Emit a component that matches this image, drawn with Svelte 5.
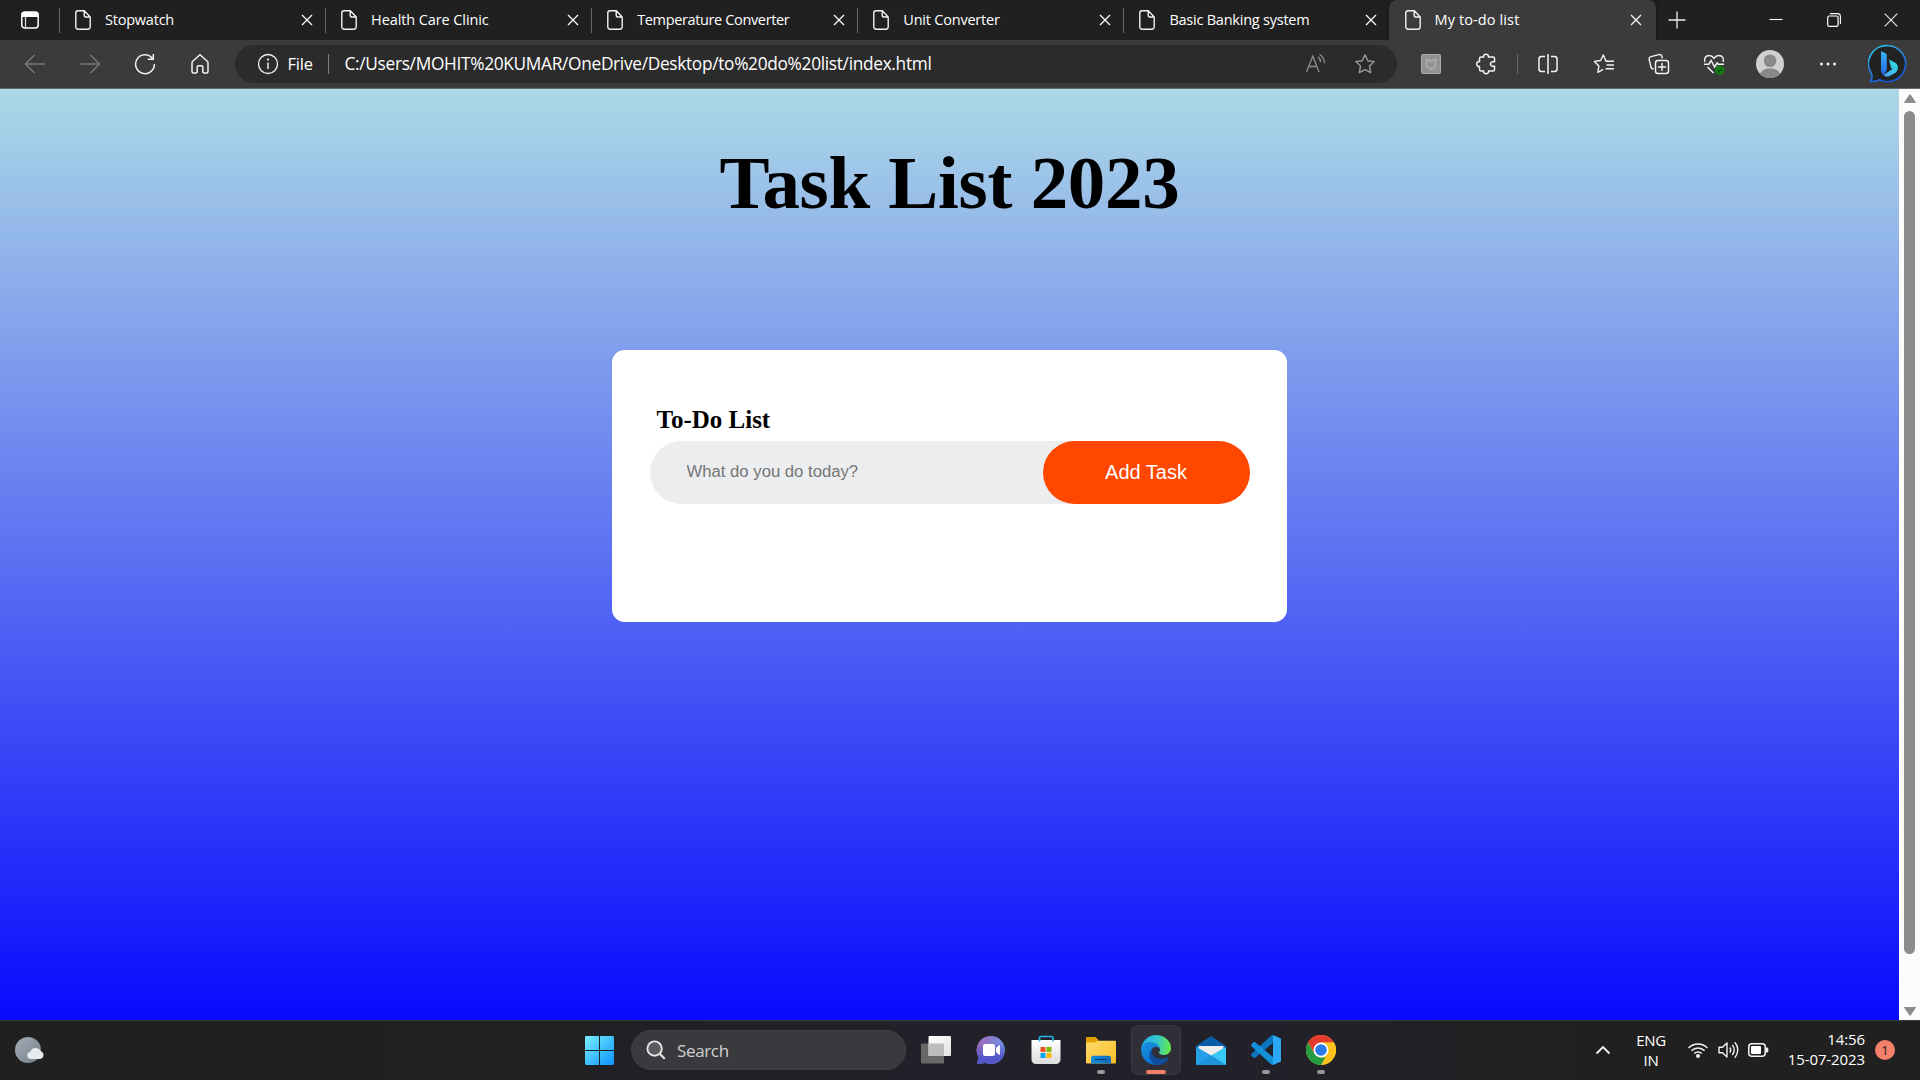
<script>
  const tabs = [
    { title: 'Stopwatch', fit: 'a' },
    { title: 'Health Care Clinic', fit: 'b' },
    { title: 'Temperature Converter', fit: 'c' },
    { title: 'Unit Converter', fit: 'd' },
    { title: 'Basic Banking system', fit: 'e' },
    { title: 'My to-do list', fit: 'f', active: true },
  ];
</script>

<div class="screen">
  <header class="tabbar">
    <div class="workspace">
      <svg width="20" height="20" viewBox="0 0 20 20"><rect x="1.8" y="2" width="16.4" height="16" rx="3" fill="none" stroke="#fff" stroke-width="1.5" /><path d="M1.5 7V5a3 3 0 0 1 3-3h11a3 3 0 0 1 3 3v2z" fill="#fff" /><path d="M5.500 7v11" stroke="#ddd" stroke-width="1.200" /></svg>
    </div>
    {#each tabs as tab}
      <div class="tab" class:active={tab.active}>
        <svg class="doc" width="16" height="20" viewBox="0 0 16 20"><path d="M3 .8h6.3L15.2 7v10a2.2 2.2 0 0 1-2.2 2.2H3A2.2 2.2 0 0 1 .8 17V3A2.2 2.2 0 0 1 3 .8zM9.2 1v4.2A1.8 1.8 0 0 0 11 7h4" fill="none" stroke="#f2f2f2" stroke-width="1.4" /></svg>
        <span class="title {tab.fit}">{tab.title}</span>
        <svg class="x" width="12" height="12" viewBox="0 0 12 12"><path d="M1 1l10 10M11 1L1 11" stroke="#f4f4f4" stroke-width="1.4" /></svg>
      </div>
    {/each}
    <svg class="plus" width="18" height="18" viewBox="0 0 18 18"><path d="M9 .5v17M.5 9h17" stroke="#eee" stroke-width="1.3" /></svg>
    <div class="caption">
      <svg width="14" height="14" viewBox="0 0 14 14"><path d="M.5 6.500h13" stroke="#fff" stroke-width="1.1" /></svg>
      <svg width="14" height="14" viewBox="0 0 14 14"><path d="M3 .6h7.6A2.8 2.8 0 0 1 13.4 3.4V11" fill="none" stroke="#fff" stroke-width="1.1" /><rect x=".7" y="3" width="10.4" height="10.4" rx="1.6" fill="none" stroke="#fff" stroke-width="1.2" /></svg>
      <svg width="14" height="14" viewBox="0 0 14 14"><path d="M.7 .7l12.6 12.6M13.3 .7L.7 13.3" stroke="#eee" stroke-width="1.1" /></svg>
    </div>
  </header>

  <nav class="toolbar">
    <div class="navs">
      <svg width="22" height="22" viewBox="0 0 22 22"><path d="M21 11H2M10.5 2L1.5 11l9 9" fill="none" stroke="#777" stroke-width="1.5" /></svg>
      <svg width="22" height="22" viewBox="0 0 22 22"><path d="M1 11h19M11.5 2l9 9-9 9" fill="none" stroke="#777" stroke-width="1.5" /></svg>
      <svg width="22" height="22" viewBox="0 0 22 22"><path d="M18.2 5.2A9.4 9.4 0 1 0 20.4 11M19.3 1v5.3h-5.5" fill="none" stroke="#f2f2f2" stroke-width="1.5" /></svg>
      <svg width="22" height="22" viewBox="0 0 22 22"><path d="M11 1.8l7.3 6.4a2 2 0 0 1 .7 1.5v8.8a1.5 1.5 0 0 1-1.5 1.5h-2.2a1.5 1.5 0 0 1-1.5-1.5V14a1.3 1.3 0 0 0-1.3-1.3h-3A1.3 1.3 0 0 0 8.2 14v4.5A1.5 1.5 0 0 1 6.700 20H4.500A1.500 1.500 0 0 1 3 18.500V9.700a2 2 0 0 1 .7-1.500z" fill="none" stroke="#f2f2f2" stroke-width="1.500" /></svg>
    </div>
    <div class="address">
      <svg width="22" height="22" viewBox="0 0 22 22"><circle cx="11" cy="11" r="9.500" fill="none" stroke="#eee" stroke-width="1.300" /><path d="M11 9.500V16" stroke="#eee" stroke-width="1.500" /><circle cx="11" cy="6.600" r="1.100" fill="#eee" /></svg>
      <span class="scheme">File</span>
      <i class="bar"></i>
      <span class="url">C:/Users/MOHIT%20KUMAR/OneDrive/Desktop/to%20do%20list/index.html</span>
      <svg class="read" width="22" height="22" viewBox="0 0 22 22"><path d="M1.500 19L7.800 3l6.200 16M3.800 13.500h8M13 3.800c1.700 1.300 2.500 3 2.600 5.200M14.500 1.300c3.200 2.200 4.900 5.400 5 9" fill="none" stroke="#8e8e8e" stroke-width="1.300" /></svg>
      <svg class="fav" width="22" height="22" viewBox="0 0 22 22"><path d="M11 1.800l2.800 5.900 6.400.9-4.700 4.500 1.200 6.600L11 16.600l-5.700 3.100 1.200-6.600L1.800 8.600l6.400-.9z" fill="none" stroke="#999" stroke-width="1.400" stroke-linejoin="round" /></svg>
    </div>
    <div class="actions">
      <svg width="22" height="22" viewBox="0 0 22 22"><rect x="1.500" y="1.500" width="19" height="19" rx="1" fill="#929292" stroke="#a5abb0" /><path d="M6.500 6.200l4.500 2 4.500-2v7.600L11 16.200l-4.500-2.400z" fill="none" stroke="#a9adb0" stroke-width="1.700" /></svg>
      <svg width="22" height="22" viewBox="0 0 22 22"><path d="M6 4h2.600C8.300 2 9.500 1.300 11 1.300S13.700 2 13.400 4H18a1.500 1.500 0 0 1 1.500 1.500v3.300c-2.600-.5-4 .6-4 2.200s1.400 2.700 4 2.200v3.300A1.500 1.500 0 0 1 18 18h-4.400c.2 1.800-.9 2.700-2.500 2.700s-2.800-.9-2.500-2.700H6a1.500 1.500 0 0 1-1.500-1.500v-3C2.500 13.700 1.700 12.500 1.700 11s.9-2.600 2.800-2.400V5.500A1.500 1.500 0 0 1 6 4z" fill="none" stroke="#f2f2f2" stroke-width="1.500" /></svg>
      <i class="bar dim"></i>
      <svg width="22" height="22" viewBox="0 0 22 22"><path d="M8 3.500H4.500a2.500 2.500 0 0 0-2.500 2.500v10a2.500 2.500 0 0 0 2.500 2.500H8M14 3.500h3.500a2.500 2.500 0 0 1 2.500 2.500v10a2.500 2.500 0 0 1-2.500 2.500H14M11 1v20" fill="none" stroke="#f5f5f5" stroke-width="1.500" /></svg>
      <svg width="22" height="22" viewBox="0 0 22 22"><path d="M15 8.200l-2.200-.4L10.300 2 7.600 7.500l-6.200.9 4.500 4.500-1.100 6.400 5.400-3M12.500 8.200H21M13.500 12H21M12.500 15.800H21" fill="none" stroke="#f2f2f2" stroke-width="1.400" stroke-linejoin="round" /></svg>
      <svg width="22" height="22" viewBox="0 0 22 22"><rect x="7.500" y="7.500" width="13" height="13" rx="2.500" fill="none" stroke="#f2f2f2" stroke-width="1.500" /><path d="M14 10v8M10 14h8M5.500 16c-1.500 0-2.300-.8-2.700-2.500L1.200 6.500C.9 5 1.500 4 3 3.600l8-2c1.500-.3 2.600.3 2.900 1.800l.4 2" fill="none" stroke="#f2f2f2" stroke-width="1.400" /></svg>
      <svg width="22" height="22" viewBox="0 0 22 22"><path d="M1.900 9C.5 5.500 3 2.500 6 2.500c2.200 0 3.700 1 5 2.700 1.300-1.700 2.800-2.700 5-2.700 3 0 5.500 3 4.100 6.500M1 11.200h4.800l2.300-3.700 3.500 6.500 2.600-4.200 1 1.400H21M4.500 14l6 6" fill="none" stroke="#f2f2f2" stroke-width="1.500" /><circle cx="16.700" cy="17.200" r="4.700" fill="#107c10" /><path d="M14.700 17.200l1.500 1.500 2.700-2.900" fill="none" stroke="#07450a" stroke-width="1.200" /></svg>
      <svg class="avatar" width="28" height="28" viewBox="0 0 28 28"><clipPath id="face"><circle cx="14" cy="14" r="14" /></clipPath><g clip-path="url(#face)"><path d="M0 0h28v28H0z" fill="#d2d0ce" /><circle cx="14" cy="10.700" r="6.300" fill="#8a8886" /><ellipse cx="14" cy="26" rx="10.500" ry="7.800" fill="#8a8886" /></g></svg>
      <svg class="dots" width="18" height="6" viewBox="0 0 18 6"><g fill="#f2f2f2"><circle cx="2.500" cy="3" r="1.500" /><circle cx="9" cy="3" r="1.500" /><circle cx="15.500" cy="3" r="1.500" /></g></svg>
      <svg class="bing" width="40" height="40" viewBox="0 0 40 40">
        <defs><linearGradient id="bo" x1="0" y1="0" x2=".5" y2="1"><stop stop-color="#25d0ef" /><stop offset=".5" stop-color="#278ce8" /><stop offset="1" stop-color="#1757d8" /></linearGradient><linearGradient id="bb" x1="0" y1="0" x2="0" y2="1"><stop stop-color="#39b5f5" /><stop offset="1" stop-color="#2367e7" /></linearGradient><linearGradient id="bc" x1="1" y1="0" x2="0" y2="1"><stop stop-color="#29dfd6" /><stop offset="1" stop-color="#4ba3ff" /></linearGradient></defs>
        <path d="M20 1.700a18 18 0 1 1-8.500 34.100c-2.400 1.500-5.500 2-8.800 1.800 1.500-2.500 1.500-5.300.8-8A18 18 0 0 1 20 1.700z" fill="#222" stroke="url(#bo)" stroke-width="1.600" />
        <path d="M13 7l5 2.500c.6.300.8.800.8 1.500v15l-3 5c-1.800-1-2.800-2.600-2.800-5z" fill="url(#bb)" /><path d="M21 15.500l5.500 2.700c2.800 1.500 4 4.100 3.200 7-.5 1.800-1.500 3-3 4l-5.200 2.900c-2 1.200-4.400.7-5.800-1l3.100-2.300 5.700-3.800-1.500-1.200z" fill="url(#bc)" />
      </svg>
    </div>
  </nav>

  <div class="viewport">
    <main>
      <h1>Task List 2023</h1>
      <section class="card">
        <h2>To-Do List</h2>
        <div class="row">
          <input type="text" placeholder="What do you do today?" />
          <button>Add Task</button>
        </div>
      </section>
    </main>
    <aside class="scrollbar">
      <svg width="12" height="9" viewBox="0 0 12 9"><path d="M6 .5L11.500 8.500H.5z" fill="#8b8b8b" stroke="#8b8b8b" stroke-linejoin="round" /></svg>
      <div class="thumb"></div>
      <svg class="down" width="12" height="9" viewBox="0 0 12 9"><path d="M6 8.500L11.500 .5H.5z" fill="#8b8b8b" stroke="#8b8b8b" stroke-linejoin="round" /></svg>
    </aside>
  </div>

  <footer class="taskbar">
    <div class="weather">
      <svg width="30" height="28" viewBox="0 0 30 28"><defs><linearGradient id="moon" x1="0" y1="0" x2="1" y2="1"><stop stop-color="#a4afba" /><stop offset="1" stop-color="#747d86" /></linearGradient></defs><circle cx="13" cy="14" r="13" fill="url(#moon)" /><path d="M15.500 23a3.700 3.700 0 0 1-.2-7.300 5.600 5.600 0 0 1 10.300-.5 4 4 0 0 1-.6 7.800z" fill="#e6ebf0" /></svg>
    </div>
    <div class="dock">
      <svg class="start" width="29" height="29" viewBox="0 0 29 29"><defs><linearGradient id="win" gradientUnits="userSpaceOnUse" x1="0" y1="0" x2="29" y2="29"><stop stop-color="#78f0ff" /><stop offset="1" stop-color="#0b93fb" /></linearGradient></defs><path d="M1 0h13v14H0V1zM15 0h13l1 1v13H15zM0 15h14v14H1l-1-1zM15 15h14v13l-1 1H15z" fill="url(#win)" /></svg>
      <div class="search">
        <svg width="20" height="20" viewBox="0 0 20 20"><circle cx="8.600" cy="8.600" r="7.200" fill="#5a595e" stroke="#e4e4e4" stroke-width="1.900" /><path d="M13.700 13.700l4.500 4.500" stroke="#e4e4e4" stroke-width="2.200" stroke-linecap="round" /></svg>
        <span>Search</span>
      </div>
      <div class="app">
        <svg width="32" height="30" viewBox="0 0 32 30"><defs><linearGradient id="tv" x1="0" y1="0" x2="1" y2="1"><stop stop-color="#fff" /><stop offset="1" stop-color="#e2e2e2" /></linearGradient></defs><rect x="1" y="8.500" width="23" height="20" rx="1" fill="#686868" /><rect x="8.500" y="1" width="22.500" height="20" rx="1" fill="url(#tv)" /><path d="M8.500 8.500H24V21H8.500z" fill="#bcbcbc" /></svg>
      </div>
      <div class="app">
        <svg width="30" height="30" viewBox="0 0 30 30"><defs><linearGradient id="chat" x1="0" y1="0" x2="1" y2="0"><stop stop-color="#a268b4" /><stop offset="1" stop-color="#6f91e8" /></linearGradient><linearGradient id="chat2" x1="0" y1="0" x2="0" y2="1"><stop offset=".25" stop-color="#5558c8" stop-opacity="0" /><stop offset=".75" stop-color="#5558c8" /></linearGradient></defs><path d="M15 1a14 14 0 1 1-5.500 26.900L1 29l1.500-7A14 14 0 0 1 15 1z" fill="url(#chat)" /><path d="M15 1a14 14 0 1 1-5.500 26.900L1 29l1.500-7A14 14 0 0 1 15 1z" fill="url(#chat2)" /><rect x="7" y="9" width="12" height="12" rx="2.200" fill="#fff" /><path d="M20 13l2.700-2.500c.6-.5 1.300-.2 1.300.6v7.800c0 .8-.7 1.100-1.300.6L20 17z" fill="#fff" /></svg>
      </div>
      <div class="app">
        <svg width="30" height="30" viewBox="0 0 30 30"><defs><linearGradient id="bag" x1="0" y1="0" x2="0" y2="1"><stop stop-color="#fff" /><stop offset="1" stop-color="#dcdcdc" /></linearGradient></defs><path d="M.5 5h29v19.500a4.500 4.500 0 0 1-4.500 4.500H5a4.500 4.500 0 0 1-4.500-4.500z" fill="url(#bag)" /><path d="M8.500 6.500V3A1.500 1.500 0 0 1 10 1.500h10.500A1.500 1.500 0 0 1 22 3v3.500" fill="none" stroke="#24b4ea" stroke-width="1.700" /><path d="M9.500 12h5v5h-5z" fill="#f25022" /><path d="M15.500 12h5v5h-5z" fill="#7fba00" /><path d="M9.500 18h5v5h-5z" fill="#00a4ef" /><path d="M15.500 18h5v5h-5z" fill="#ffb900" /></svg>
      </div>
      <div class="app running">
        <svg width="30" height="28" viewBox="0 0 30 28"><defs><linearGradient id="fold" x1="0" y1="0" x2="1" y2="1"><stop stop-color="#ffdc6c" /><stop offset="1" stop-color="#f8bd25" /></linearGradient><linearGradient id="pkt" x1="0" y1="0" x2="1" y2="0"><stop stop-color="#1490df" /><stop offset="1" stop-color="#0f69bc" /></linearGradient></defs><path d="M0 2A1 1 0 0 1 1 1h8.500l3 3v4H0z" fill="#e0a203" /><path d="M0 6.500h9l3-1.700h17a1 1 0 0 1 1 1V26.500a1 1 0 0 1-1 1H1a1 1 0 0 1-1-1z" fill="url(#fold)" /><path d="M5 27.500V22a2.300 2.300 0 0 1 2.300-2.300h15.400A2.300 2.300 0 0 1 25 22v5.500z" fill="url(#pkt)" /><path d="M8.500 23.500h13" stroke="#093f7c" stroke-width="1.200" /></svg>
      </div>
      <div class="app focused">
        <svg width="30" height="30" viewBox="0 0 30 30">
          <defs><linearGradient id="e1" x1="0" y1=".4" x2="1" y2=".5"><stop stop-color="#2aaeea" /><stop offset=".5" stop-color="#30c5cb" /><stop offset="1" stop-color="#6bea47" /></linearGradient><linearGradient id="e2" x1="0" y1="0" x2=".5" y2="1"><stop stop-color="#1c91dd" /><stop offset="1" stop-color="#0874d6" /></linearGradient></defs>
          <path d="M.2 13.500C1 6 7.300 0 15 0c8.500 0 15 6 15 13 0 4.300-3.300 7-7.200 7-3 0-4.800-1-4.800-2.200 0-.8 1-1.300 1-3.200 0-2-2-4.500-6-4.500z" fill="url(#e1)" />
          <path d="M.1 14.500C.5 9.500 4.500 7 9 7c5.500 0 10 3.500 10 7.500-1-2-2.700-2.800-4.200-2.800-2.800 0-4.800 3-4.800 6.300 0 6 4.500 10.500 9.800 11C10 32 0 25.300.1 14.500z" fill="url(#e2)" />
          <path d="M12.600 12.300c-1.800 1.200-2.100 3.400-1.800 5 .8 4.300 5 6.700 9.700 6.700 2.500 0 4.600-.8 6.300-1.900.8-.5 1.500.1 1 .9C25 28 20 30.500 16 30 10 28.500 8 23 8.500 19c.3-3 1.800-5.500 4.100-6.700z" fill="#104d9a" />
        </svg>
      </div>
      <div class="app">
        <svg width="30" height="29" viewBox="0 0 30 29"><path d="M0 10L15 0l15 10v5H0z" fill="#0a5da8" /><path d="M2.500 10h25v9l-12.500 4L2.500 17z" fill="#eee" /><path d="M0 11l15 9 15-9v18H0z" fill="#26a9ea" /><path d="M30 11v18L15 19.500z" fill="#38c8f4" /><path d="M0 11l15 8.500L30 29H0z" fill="#1f93de" /><path d="M0 11l15 8.500L0 29z" fill="#25a0e6" /></svg>
      </div>
      <div class="app running">
        <svg width="30" height="30" viewBox="0 0 30 30"><path d="M22 0v8L4.500 22.500c-.7.600-1.500.6-2.200 0L.7 21c-.8-.8-.8-1.800 0-2.600L20 .7z" fill="#0b75bd" /><path d="M22 30v-8L4.500 7.500c-.7-.6-1.500-.6-2.200 0L.7 9c-.8.800-.8 1.800 0 2.600L20 29.300z" fill="#1390d8" /><path d="M22 0l8 3.500v23L22 30z" fill="#2aa8f3" /></svg>
      </div>
      <div class="app running">
        <svg width="30" height="30" viewBox="0 0 30 30"><circle cx="15" cy="15" r="15" fill="#fcc21b" /><path d="M15 7.500h13a15 15 0 0 0-26 0l6.500 11.300z" fill="#e33b2e" /><path d="M2 7.500l6.500 11.300L15 22.500h6.500L15 30A15 15 0 0 1 2 7.500z" fill="#269a43" /><path d="M21.500 18.700L15 30a15 15 0 0 0 13-22.500H15z" fill="#fcc21b" /><circle cx="15" cy="15" r="7.500" fill="#fff" /><circle cx="15" cy="15" r="5.800" fill="#2a7bea" /></svg>
      </div>
    </div>
    <div class="tray">
      <svg class="chev" width="16" height="10" viewBox="0 0 16 10"><path d="M1.500 8.500L8 2l6.500 6.500" fill="none" stroke="#f2f2f2" stroke-width="1.900" /></svg>
      <div class="lang"><span>ENG</span><span>IN</span></div>
      <svg class="wifi" width="20" height="18" viewBox="0 0 20 18"><g fill="none" stroke="#f2f2f2" stroke-width="1.500"><path d="M.6 7a13.300 13.300 0 0 1 18.800 0M3.400 9.700a9.300 9.300 0 0 1 13.200 0M6.200 12.500a5.400 5.400 0 0 1 7.600 0" /></g><circle cx="10" cy="15" r="2" fill="#f2f2f2" /></svg>
      <svg class="vol" width="21" height="18" viewBox="0 0 21 18"><path d="M1 6.300h3.500L9 2v14l-4.500-4.300H1zM11.800 6.500a4 4 0 0 1 0 5M14.300 4a7.500 7.500 0 0 1 0 10M16.800 1.300a11.500 11.500 0 0 1 0 15.400" fill="none" stroke="#f2f2f2" stroke-width="1.400" stroke-linejoin="round" /></svg>
      <svg class="bat" width="21" height="14" viewBox="0 0 21 14"><rect x=".8" y=".8" width="16.400" height="12.400" rx="3" fill="none" stroke="#f2f2f2" stroke-width="1.500" /><rect x="3" y="3" width="10" height="8" rx="1" fill="#fff" /><path d="M18 4.500h1a1.300 1.300 0 0 1 1.300 1.300v2.400A1.300 1.300 0 0 1 19 9.500h-1z" fill="#f2f2f2" /></svg>
      <div class="clock"><span class="time">14:56</span><span class="date">15-07-2023</span></div>
      <div class="badge">1</div>
    </div>
  </footer>
</div>

<style>
  :global(body) { margin: 0; overflow: hidden; }
  svg { display: block; flex: none; }
  .screen { width: 1920px; height: 1080px; display: flex; flex-direction: column; font-family: "Open Sans", "Noto Sans", sans-serif; color: #fff; overflow: hidden; }
  .tabbar { height: 40px; flex: none; display: flex; background: #202020; align-items: center; }
  .workspace { width: 59px; height: 40px; flex: none; display: flex; align-items: center; justify-content: center; box-sizing: border-box; }
  .tab { width: 266.1px; height: 40px; flex: none; box-sizing: border-box; display: flex; align-items: center; padding: 0 12px 0 16px; background: linear-gradient(#686868, #686868) 0 8px / 1px 25px no-repeat; }
  .tab.active { background: #3b3b3b; border-radius: 8px 8px 0 0; box-shadow: 0 0 3px #111; clip-path: inset(0 -3px 0 -3px); padding-right: 14px; }
  .title { margin-left: 14px; flex: 1; font-size: 14.5px; white-space: nowrap; line-height: 20px; }
  .active .title { margin-left: 13px; }
  .a { letter-spacing: -0.22px; } .b { letter-spacing: -0.1px; } .c { letter-spacing: -0.36px; }
  .d { letter-spacing: -0.21px; } .e { letter-spacing: -0.23px; } .f { letter-spacing: 0.12px; }
  .plus { margin-left: 12px; }
  .caption { margin-left: auto; margin-right: 22px; display: flex; gap: 43.500px; }
  .toolbar { height: 49px; flex: none; box-sizing: border-box; border-bottom: 1px solid #696969; background: #3b3b3b; display: flex; align-items: center; }
  .navs { display: flex; gap: 33px; margin-left: 24px; }
  .address { width: 1162px; height: 38px; margin-left: 24px; flex: none; box-sizing: border-box; border-radius: 19px; background: #2b2b2b; display: flex; align-items: center; padding-left: 21.500px; font-size: 16.500px; line-height: 24px; white-space: nowrap; }
  .scheme { width: 40px; margin-left: 9px; letter-spacing: -0.2px; }
  .bar { width: 1px; height: 20px; background: #828282; }
  .bar.dim { background: #686868; margin: 0 19px 0 20px; }
  .url { margin-left: 16px; font-size: 17.300px; letter-spacing: -0.310px; }
  .read { margin-left: auto; }
  .fav { margin: 0 21px 0 27px; }
  .actions { display: flex; align-items: center; margin-left: 23px; }
  .actions svg + svg { margin-left: 33.300px; }
  .actions .avatar { margin-left: 31px !important; }
  .actions .dots { margin-left: 34.500px !important; }
  .actions .bing { margin-left: 31.500px !important; }
  .viewport { height: 931px; flex: none; display: flex; }
  main { width: 1899px; height: 931px; background: linear-gradient(#add8e6, #00f 977px); display: flex; flex-direction: column; align-items: center; overflow: hidden; font-family: "Liberation Serif", serif; color: #000; }
  h1 { margin: 51px 0 0; font-size: 75px; line-height: 86px; font-weight: 700; letter-spacing: -0.300px; }
  .card { width: 675px; height: 272px; margin-top: 124px; box-sizing: border-box; border-radius: 12.500px; background: #fff; padding: 55px 37.500px 0; }
  h2 { margin: 0 0 7px 7px; font-size: 25px; line-height: 29px; }
  .row { display: flex; height: 63px; border-radius: 32px; background: #ecedef; }
  input { flex: 1; min-width: 0; border: 0; outline: 0; background: transparent; padding: 0 0 2px 37px; font: 16.700px "Liberation Sans", sans-serif; }
  input::placeholder { color: #757575; opacity: 1; }
  button { width: 207px; border: 0; border-radius: 32px; background: #ff4700; color: #fff; padding: 0; font: 20px "Liberation Sans", sans-serif; }
  .scrollbar { width: 21px; box-sizing: border-box; background: #fcfcfc; display: flex; flex-direction: column; align-items: center; padding: 5px 0 4px; }
  .thumb { width: 11px; height: 843px; margin-top: 8px; border-radius: 6px; background: #8b8b8b; }
  .down { margin-top: auto; }
  .taskbar { height: 60px; flex: none; box-sizing: border-box; border-top: 1px solid #3e3e3e; padding-bottom: 1px; background: linear-gradient(90deg, #202020 20%, #22212a 50%, #22212a 65%, #202020 82%); display: flex; align-items: center; }
  .weather { width: 585px; flex: none; padding-left: 15px; box-sizing: border-box; }
  .dock { display: flex; align-items: center; }
  .search { width: 275px; height: 40px; margin: 0 5px 0 17px; border-radius: 20px; box-sizing: border-box; border: 1px solid #414045; background: #3a393e; display: flex; align-items: center; padding-left: 14px; gap: 11px; color: #d0d0d0; font-size: 17px; letter-spacing: -0.35px; }
  .app { position: relative; width: 50px; height: 50px; margin-right: 5px; box-sizing: border-box; border-radius: 6px; display: flex; align-items: center; justify-content: center; }
  .focused { background: #302f37; border: 1px solid #393840; }
  .running::after, .focused::after { content: ""; position: absolute; bottom: 1px; left: 21px; width: 8px; height: 4px; border-radius: 2px; background: #98979b; }
  .focused::after { left: 14px; bottom: 0; width: 20px; background: #f5806a; }
  .tray { margin-left: auto; margin-right: 25px; display: flex; align-items: center; font-size: 15px; line-height: 20px; }
  .lang { display: flex; flex-direction: column; align-items: center; width: 34px; margin-left: 23px; letter-spacing: -0.3px; padding-bottom: 1px; }
  .wifi { margin-left: 20px; } .vol { margin-left: 10px; } .bat { margin-left: 9px; }
  .clock { display: flex; flex-direction: column; align-items: flex-end; width: 78px; margin-left: 18px; white-space: nowrap; letter-spacing: -0.1px; padding-bottom: 3px; }
  .badge { width: 20px; height: 20px; margin-left: 10px; border-radius: 50%; background: #f5806a; color: #222; font-size: 13px; text-align: center; }
</style>
